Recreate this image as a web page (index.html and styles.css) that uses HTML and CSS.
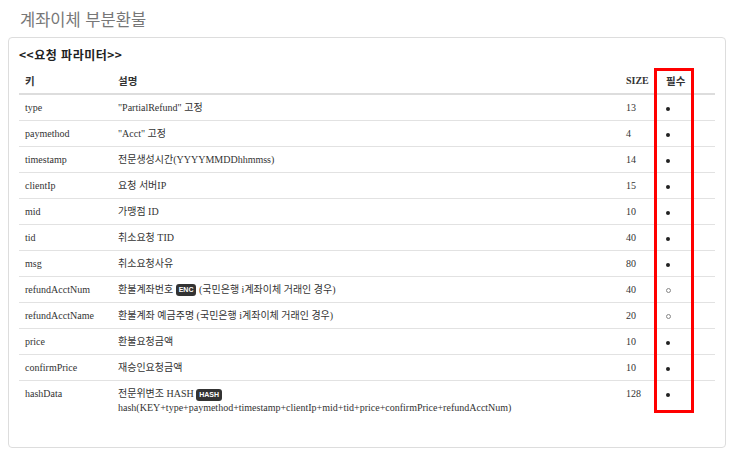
FILE: index.html
```html
<!DOCTYPE html>
<html lang="ko">
<head>
    <meta charset="UTF-8">
    <meta name="viewport" content="width=device-width, initial-scale=1.0">
    <title>계좌이체 부분환불</title>
    <link rel="stylesheet" href="styles.css">
</head>
<body>
    <div id="main">
        <h1 class="page-title">계좌이체 부분환불</h1>
        <div class="panel">
            <p class="section-title">&lt;&lt;요청 파라미터&gt;&gt;</p>
            <div class="table-wrap">
                <table class="params">
                    <colgroup>
                        <col class="c-key">
                        <col>
                        <col class="c-size">
                        <col class="c-req">
                    </colgroup>
                    <thead>
                        <tr>
                            <th>키</th>
                            <th>설명</th>
                            <th class="size">SIZE</th>
                            <th class="req">필수</th>
                        </tr>
                    </thead>
                    <tbody>
                        <tr><td>type</td><td>"PartialRefund" 고정</td><td class="size">13</td><td class="req"><span class="dot"></span></td></tr>
                        <tr><td>paymethod</td><td>"Acct" 고정</td><td class="size">4</td><td class="req"><span class="dot"></span></td></tr>
                        <tr><td>timestamp</td><td>전문생성시간(YYYYMMDDhhmmss)</td><td class="size">14</td><td class="req"><span class="dot"></span></td></tr>
                        <tr><td>clientIp</td><td>요청 서버IP</td><td class="size">15</td><td class="req"><span class="dot"></span></td></tr>
                        <tr><td>mid</td><td>가맹점 ID</td><td class="size">10</td><td class="req"><span class="dot"></span></td></tr>
                        <tr><td>tid</td><td>취소요청 TID</td><td class="size">40</td><td class="req"><span class="dot"></span></td></tr>
                        <tr><td>msg</td><td>취소요청사유</td><td class="size">80</td><td class="req"><span class="dot"></span></td></tr>
                        <tr><td>refundAcctNum</td><td>환불계좌번호 <span class="badge">ENC</span> (국민은행 i계좌이체 거래인 경우)</td><td class="size">40</td><td class="req"><span class="dot empty"></span></td></tr>
                        <tr><td>refundAcctName</td><td>환불계좌 예금주명 (국민은행 i계좌이체 거래인 경우)</td><td class="size">20</td><td class="req"><span class="dot empty"></span></td></tr>
                        <tr><td>price</td><td>환불요청금액</td><td class="size">10</td><td class="req"><span class="dot"></span></td></tr>
                        <tr><td>confirmPrice</td><td>재승인요청금액</td><td class="size">10</td><td class="req"><span class="dot"></span></td></tr>
                        <tr class="last">
                            <td>hashData</td>
                            <td>전문위변조 HASH <span class="badge">HASH</span><br>hash(KEY+type+paymethod+timestamp+clientIp+mid+tid+price+confirmPrice+refundAcctNum)</td>
                            <td class="size">128</td>
                            <td class="req"><span class="dot"></span></td>
                        </tr>
                    </tbody>
                </table>
                <div class="mark"></div>
            </div>
        </div>
    </div>
</body>
</html>
```

FILE: styles.css
```css
body
{
    margin: 0;
    background-color: #fff;
    font-family: "Liberation Serif", "Noto Sans CJK KR", serif;
    color: #333;
}
#main
{
    padding: 9px 8px 0 8px;
}
.page-title
{
    margin: 0 0 8px 12px;
    font-family: "Noto Sans CJK KR", "Noto Sans", sans-serif;
    font-size: 16.5px;
    font-weight: 400;
    line-height: 20px;
    color: #777;
}
.panel
{
    border: 1px solid #ddd;
    border-radius: 4px;
    padding: 10px 10px 25px 10px;
}
.section-title
{
    margin: 0 0 6px 0;
    font-family: "Noto Sans CJK KR", "Noto Sans", sans-serif;
    font-size: 12px;
    font-weight: 700;
    letter-spacing: 0.5px;
    line-height: 14px;
    color: #222;
}
.table-wrap
{
    position: relative;
}
.params
{
    width: 100%;
    border-collapse: collapse;
    table-layout: fixed;
    font-size: 10px;
}
.c-key
{
    width: 93px;
}
.c-size
{
    width: 38px;
}
.c-req
{
    width: 57px;
}
.params th
{
    height: 25px;
    padding: 0 6px;
    text-align: left;
    font-weight: 700;
    border-bottom: 2px solid #ddd;
}
.params th:nth-child(1),
.params th:nth-child(2),
.params th.req
{
    font-family: "Noto Sans CJK KR", sans-serif;
    font-size: 10.5px;
}
.params td
{
    height: 25px;
    padding: 0 6px;
    border-bottom: 1px solid #e2e2e2;
    vertical-align: middle;
    line-height: 13px;
}
.params .req
{
    padding-left: 8px;
}
.params tr.last td
{
    border-bottom: none;
    vertical-align: top;
    padding-top: 6px;
    padding-bottom: 8px;
}
.dot
{
    display: inline-block;
    width: 4px;
    height: 4px;
    border-radius: 50%;
    background-color: #222;
    vertical-align: middle;
}
.dot.empty
{
    width: 3px;
    height: 3px;
    background-color: transparent;
    border: 1px solid #888;
}
.badge
{
    display: inline-block;
    padding: 0 3px;
    border-radius: 3px;
    background-color: #333;
    color: #fff;
    font-family: "Liberation Sans", sans-serif;
    font-size: 7px;
    font-weight: 700;
    line-height: 12px;
    vertical-align: middle;
}
.mark
{
    position: absolute;
    top: 0;
    left: 635px;
    width: 40px;
    height: 345px;
    box-sizing: border-box;
    border: 3px solid #f00;
}
```
